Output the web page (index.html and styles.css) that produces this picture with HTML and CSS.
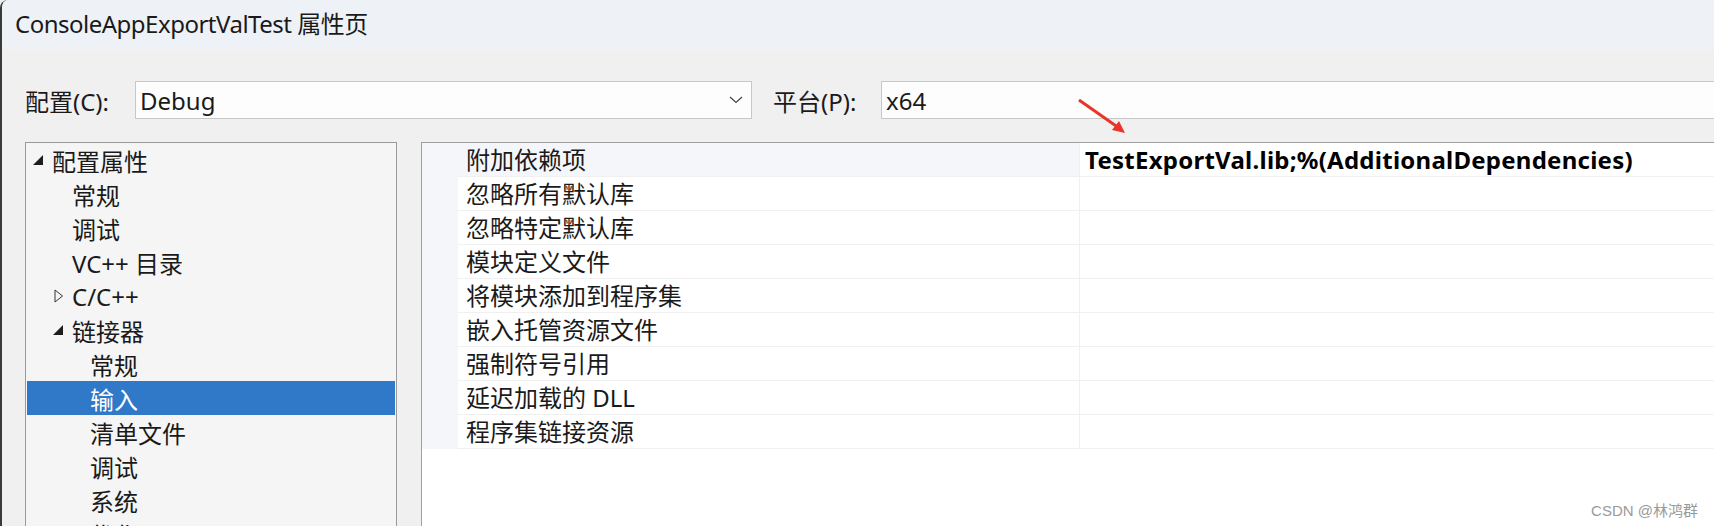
FILE: index.html
```html
<!DOCTYPE html>
<html lang="zh-CN">
<head>
  <meta charset="UTF-8" />
  <title>ConsoleAppExportValTest 属性页</title>
  <link rel="stylesheet" href="styles.css">
</head>
<body>

  <div class="window">
    <div class="titlebar">ConsoleAppExportValTest 属性页</div>

    <div class="config-row">
      <span class="config-label">配置(C):</span>
      <div class="combo combo-config">
        <span>Debug</span>
        <svg class="chevron" viewBox="0 0 14 8">
          <path d="M1 1l6 5.5L13 1"/>
        </svg>
      </div>
      <span class="config-label platform-label">平台(P):</span>
      <div class="combo combo-platform"><span>x64</span></div>
    </div>

    <div class="main">
      <div class="tree">
        <div class="tree-row lvl0">
          <span class="toggle"><svg viewBox="0 0 10 10"><polygon points="10,0 10,10 0,10"/></svg></span>
          <span>配置属性</span>
        </div>
        <div class="tree-row lvl1"><span class="toggle"></span><span>常规</span></div>
        <div class="tree-row lvl1"><span class="toggle"></span><span>调试</span></div>
        <div class="tree-row lvl1"><span class="toggle"></span><span>VC++ 目录</span></div>
        <div class="tree-row lvl1">
          <span class="toggle"><svg class="open" viewBox="0 0 10 14"><polygon points="1,1 8.5,7 1,13"/></svg></span>
          <span>C/C++</span>
        </div>
        <div class="tree-row lvl1">
          <span class="toggle"><svg viewBox="0 0 10 10"><polygon points="10,0 10,10 0,10"/></svg></span>
          <span>链接器</span>
        </div>
        <div class="tree-row lvl2"><span class="toggle"></span><span>常规</span></div>
        <div class="tree-row lvl2 selected"><span class="toggle"></span><span>输入</span></div>
        <div class="tree-row lvl2"><span class="toggle"></span><span>清单文件</span></div>
        <div class="tree-row lvl2"><span class="toggle"></span><span>调试</span></div>
        <div class="tree-row lvl2"><span class="toggle"></span><span>系统</span></div>
        <div class="tree-row lvl2"><span class="toggle"></span><span>优化</span></div>
      </div>

      <div class="grid">
        <div class="grid-row current">
          <div class="gutter"></div>
          <div class="prop-name">附加依赖项</div>
          <div class="prop-value">TestExportVal.lib;%(AdditionalDependencies)</div>
        </div>
        <div class="grid-row"><div class="gutter"></div><div class="prop-name">忽略所有默认库</div><div class="prop-value"></div></div>
        <div class="grid-row"><div class="gutter"></div><div class="prop-name">忽略特定默认库</div><div class="prop-value"></div></div>
        <div class="grid-row"><div class="gutter"></div><div class="prop-name">模块定义文件</div><div class="prop-value"></div></div>
        <div class="grid-row"><div class="gutter"></div><div class="prop-name">将模块添加到程序集</div><div class="prop-value"></div></div>
        <div class="grid-row"><div class="gutter"></div><div class="prop-name">嵌入托管资源文件</div><div class="prop-value"></div></div>
        <div class="grid-row"><div class="gutter"></div><div class="prop-name">强制符号引用</div><div class="prop-value"></div></div>
        <div class="grid-row"><div class="gutter"></div><div class="prop-name">延迟加载的 DLL</div><div class="prop-value"></div></div>
        <div class="grid-row"><div class="gutter"></div><div class="prop-name">程序集链接资源</div><div class="prop-value"></div></div>
      </div>
    </div>
  </div>

  <!-- annotation arrow drawn over the screenshot -->
  <svg class="arrow" viewBox="0 0 60 46">
    <line x1="4" y1="5" x2="44" y2="33" />
    <polygon points="50,38 37,35 44,26" />
  </svg>

  <div class="watermark">CSDN @林鸿群</div>

</body>
</html>
```

FILE: styles.css
```css
* {
  box-sizing: border-box;
}

body {
  margin: 0;
  width: 1714px;
  height: 526px;
  overflow: hidden;
  position: relative;
  background: #f0f0f0;
  font-family: 'Noto Sans', 'Noto Sans CJK SC', sans-serif;
  font-size: 24px;
  color: #1a1a1a;
}

.window {
  height: 526px;
  border-left: 2px solid #3a3a3a;
  border-top-left-radius: 8px;
  overflow: hidden;
}

.titlebar {
  height: 50px;
  line-height: 48px;
  padding-left: 13px;
  background: #eef2f7;
  letter-spacing: -0.5px;
}

.config-row {
  display: flex;
  align-items: center;
  margin-top: 31px;
  height: 38px;
}

.config-label {
  margin-left: 23px;
  width: 110px;
}

.platform-label {
  margin-left: 21px;
  width: 108px;
}

.combo {
  height: 38px;
  display: flex;
  align-items: center;
  justify-content: space-between;
  background: #fdfdfd;
  border: 1px solid #c8c8c8;
  padding-left: 4px;
}

.combo-config {
  width: 617px;
}

.combo-platform {
  flex: 1;
  margin-right: -4px;
}

.chevron {
  width: 14px;
  height: 8px;
  margin-right: 8px;
  fill: none;
  stroke: #444;
  stroke-width: 1.2;
}

.main {
  display: flex;
  margin-top: 23px;
  gap: 24px;
}

.tree {
  width: 372px;
  height: 400px;
  margin-left: 23px;
  padding: 0 1px;
  background: #f5f5f5;
  border: 1px solid #9a9a9a;
}

.tree-row {
  height: 34px;
  display: flex;
  align-items: center;
  white-space: nowrap;
}

.lvl0 { padding-left: 5px; }
.lvl1 { padding-left: 25px; }
.lvl2 { padding-left: 43px; }

.toggle {
  width: 20px;
  height: 34px;
  display: flex;
  align-items: center;
}

.toggle svg {
  width: 10px;
  height: 10px;
  margin-left: 1px;
  fill: #1e1e1e;
}

.toggle svg.open {
  height: 14px;
  margin-left: 2px;
  fill: none;
  stroke: #333;
  stroke-width: 1;
}

.tree-row.selected {
  background: #3078c8;
  color: white;
}

.grid {
  flex: 1;
  height: 400px;
  margin-right: -4px;
  background: white;
  border: 1px solid #a0a0a0;
}

.grid-row {
  display: flex;
  height: 34px;
}

.gutter {
  width: 36px;
  background: #f5f6fa;
}

.prop-name {
  width: 622px;
  padding-left: 8px;
  line-height: 33px;
  border-bottom: 1px solid #f0f0f0;
  border-right: 1px solid #f0f0f0;
  white-space: nowrap;
}

.grid-row.current .prop-name {
  background: #f5f6fa;
}

.prop-value {
  flex: 1;
  padding-left: 5px;
  line-height: 33px;
  border-bottom: 1px solid #f0f0f0;
  font-weight: bold;
  color: #000;
  letter-spacing: 0.25px;
  white-space: nowrap;
}

.arrow {
  position: absolute;
  left: 1075px;
  top: 95px;
  width: 60px;
  height: 46px;
}

.arrow line {
  stroke: #e8352a;
  stroke-width: 3;
}

.arrow polygon {
  fill: #e8352a;
}

.watermark {
  position: absolute;
  right: 16px;
  bottom: 6px;
  font-family: 'Liberation Sans', 'Noto Sans CJK SC', sans-serif;
  font-size: 15px;
  color: #9a9a9a;
}
```
